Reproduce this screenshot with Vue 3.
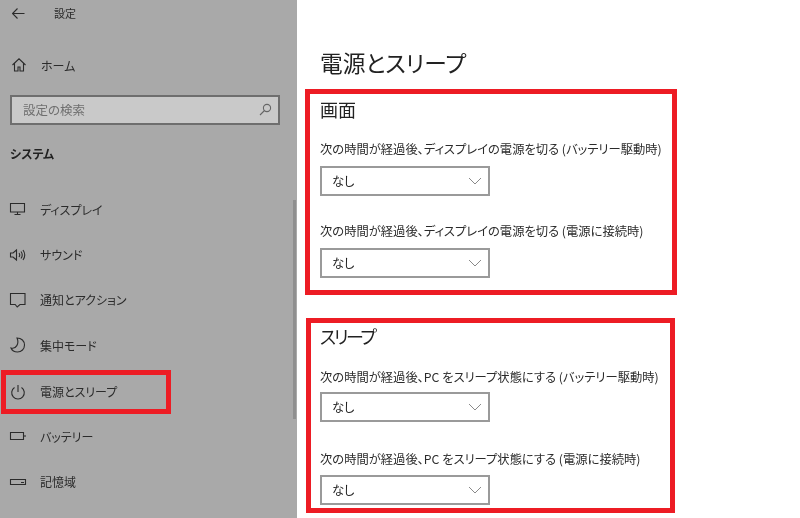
<script setup>
const navItems = [
  { label: 'ディスプレイ', icon: 'display' },
  { label: 'サウンド', icon: 'sound' },
  { label: '通知とアクション', icon: 'notify' },
  { label: '集中モード', icon: 'moon' },
  { label: '電源とスリープ', icon: 'power', active: true },
  { label: 'バッテリー', icon: 'battery' },
  { label: '記憶域', icon: 'storage' },
]
const sections = [
  {
    title: '画面',
    cls: 'screen',
    rows: ['次の時間が経過後、ディスプレイの電源を切る (バッテリー駆動時)', '次の時間が経過後、ディスプレイの電源を切る (電源に接続時)'],
  },
  {
    title: 'スリープ',
    cls: 'sleep',
    rows: ['次の時間が経過後、PC をスリープ状態にする (バッテリー駆動時)', '次の時間が経過後、PC をスリープ状態にする (電源に接続時)'],
  },
]
</script>

<template>
  <div class="app">
    <aside class="side">
      <header class="top">
        <svg class="back" width="13" height="11" viewBox="0 0 13 11"><path d="M5.500 .5l-5 5 5 5M.5 5.500h12" /></svg>
        <span class="app-title">設定</span>
      </header>
      <div class="home">
        <svg class="ico" width="16" height="16" viewBox="0 0 16 16"><path d="M1.500 8 8 1.800 14.500 8M3.500 6.500V14H7v-4h2v4h3.500V6.500" /></svg>
        <span>ホーム</span>
      </div>
      <div class="search">
        <span>設定の検索</span>
        <svg class="mag" width="13" height="13" viewBox="0 0 13 13"><circle cx="8" cy="5" r="3.600" /><path d="M5.500 7.500 1 12" /></svg>
      </div>
      <div class="group">システム</div>
      <nav class="nav">
        <div v-for="item in navItems" :key="item.label" class="nav-item" :class="{ active: item.active }">
          <svg class="ico" width="18" height="16" viewBox="0 0 18 16">
            <template v-if="item.icon === 'display'"><path d="M1.500 2.500h14v8.500h-14zM8.500 11v2.500M5.500 13.500h6" /></template>
            <template v-else-if="item.icon === 'sound'"><path d="M1.500 6v4h2.500l3.500 3V3L4 6zM10 6q1.500 2 0 4M12 4.500q2.500 3.500 0 7M14 3q3.500 5 0 10" /></template>
            <template v-else-if="item.icon === 'notify'"><path d="M1.500 1.500h14.500v11h-5l-2.800 2.500-2-2.500h-4.700z" /></template>
            <template v-else-if="item.icon === 'moon'"><path d="M8 1c4.500 0 7.500 3 7.500 7 0 4-3 7-7 7-3 0-5.500-1.500-6.500-4 5 1.500 8.500-4.500 6-10z" /></template>
            <template v-else-if="item.icon === 'power'"><path d="M5.500 3.500a6.300 6.300 0 1 0 7 0M9 1v7" /></template>
            <template v-else-if="item.icon === 'battery'"><path d="M1.500 4.500h13v7h-13zM16 7v2" /></template>
            <template v-else><path d="M1.500 5.500h15v5h-15zM12 8.500h3" /></template>
          </svg>
          <span>{{ item.label }}</span>
        </div>
      </nav>
      <div class="scrollbar"></div>
    </aside>
    <main class="main">
      <h1 class="page-title">電源とスリープ</h1>
      <section v-for="s in sections" :key="s.title" class="panel" :class="s.cls">
        <h2 class="panel-title">{{ s.title }}</h2>
        <div v-for="row in s.rows" :key="row" class="row">
          <div class="label">{{ row }}</div>
          <div class="select">
            <span>なし</span>
            <svg width="14" height="8" viewBox="0 0 14 8"><path d="M1 1l6 6 6-6" /></svg>
          </div>
        </div>
      </section>
    </main>
  </div>
</template>

<style>
html, body { margin: 0; background: #fff; }
</style>

<style scoped>
.app {
  width: 800px;
  height: 518px;
  display: flex;
  overflow: hidden;
  background: #fff;
  color: #1f1f1f;
  font-family: "Noto Sans CJK JP", "Noto Sans", sans-serif;
  font-feature-settings: "palt";
  filter: blur(0.3px);
}
.side {
  position: relative;
  width: 297px;
  flex: none;
  background: #a9a9a9;
  color: #2b2b2b;
  font-size: 12px;
}
svg { fill: none; stroke: currentColor; stroke-width: 1.1; }
.top {
  height: 26px;
  display: flex;
  align-items: center;
  padding-left: 12px;
}
.back { margin-right: 29px; }
.app-title { font-size: 11px; }
.home {
  height: 26px;
  margin-top: 26px;
  display: flex;
  align-items: center;
  padding-left: 11px;
  gap: 14px;
}
.search {
  margin: 17px 0 0 10px;
  width: 249px;
  height: 24px;
  border: 2px solid #6e6e6e;
  background: #c9c9c9;
  color: #6f6f6f;
  font-size: 12.500px;
  display: flex;
  align-items: center;
  justify-content: space-between;
  padding: 0 6px 2px 11px;
  box-sizing: content-box;
}
.mag { color: #666; }
.group {
  margin: 19px 0 0 10px;
  font-size: 12px;
  font-weight: 700;
  line-height: 20px;
  color: #222;
}
.nav { margin-top: 22.500px; }
.nav-item {
  height: 45.400px;
  display: flex;
  align-items: center;
  padding-left: 9px;
  gap: 13px;
  box-sizing: border-box;
}
.nav-item.active {
  width: 170px;
  height: 44px;
  margin: 1.500px 0 -0.100px 1px;
  padding-left: 3px;
  border: 5px solid #ed1c24;
}
.scrollbar {
  position: absolute;
  left: 293px;
  top: 200px;
  width: 3px;
  height: 219px;
  background: #8f8f8f;
}
.main { flex: 1; padding-left: 8px; }
.page-title {
  margin: 47px 0 0 15px;
  font-size: 22.700px;
  line-height: 32px;
  font-weight: 400;
  color: #222;
}
.panel {
  box-sizing: border-box;
  border: 5px solid #ed1c24;
  padding-left: 10px;
}
.screen {
  width: 372px;
  height: 206px;
  margin-top: 10px;
}
.sleep {
  width: 369px;
  height: 195px;
  margin: 23px 0 0 1px;
  padding-left: 9px;
}
.panel-title {
  margin: 0;
  font-size: 18px;
  line-height: 24px;
  font-weight: 400;
  color: #222;
}
.screen .panel-title { margin-top: 3px; }
.sleep .panel-title { margin-top: 1px; letter-spacing: -2.400px; }
.row { margin-top: 19px; }
.row + .row { margin-top: 26px; }
.sleep .row { margin-top: 19.500px; }
.sleep .row + .row { margin-top: 28px; }
.label {
  font-size: 12.300px;
  line-height: 18px;
  white-space: nowrap;
  color: #2b2b2b;
}
.select {
  box-sizing: border-box;
  margin-top: 8px;
  width: 170px;
  height: 30px;
  border: 2px solid #9a9a9a;
  display: flex;
  align-items: center;
  justify-content: space-between;
  padding: 0 6px 0 10px;
  font-size: 12.300px;
}
.sleep .select { margin-top: 6.500px; }
.select svg { color: #8a8a8a; stroke-width: 1; }
</style>
